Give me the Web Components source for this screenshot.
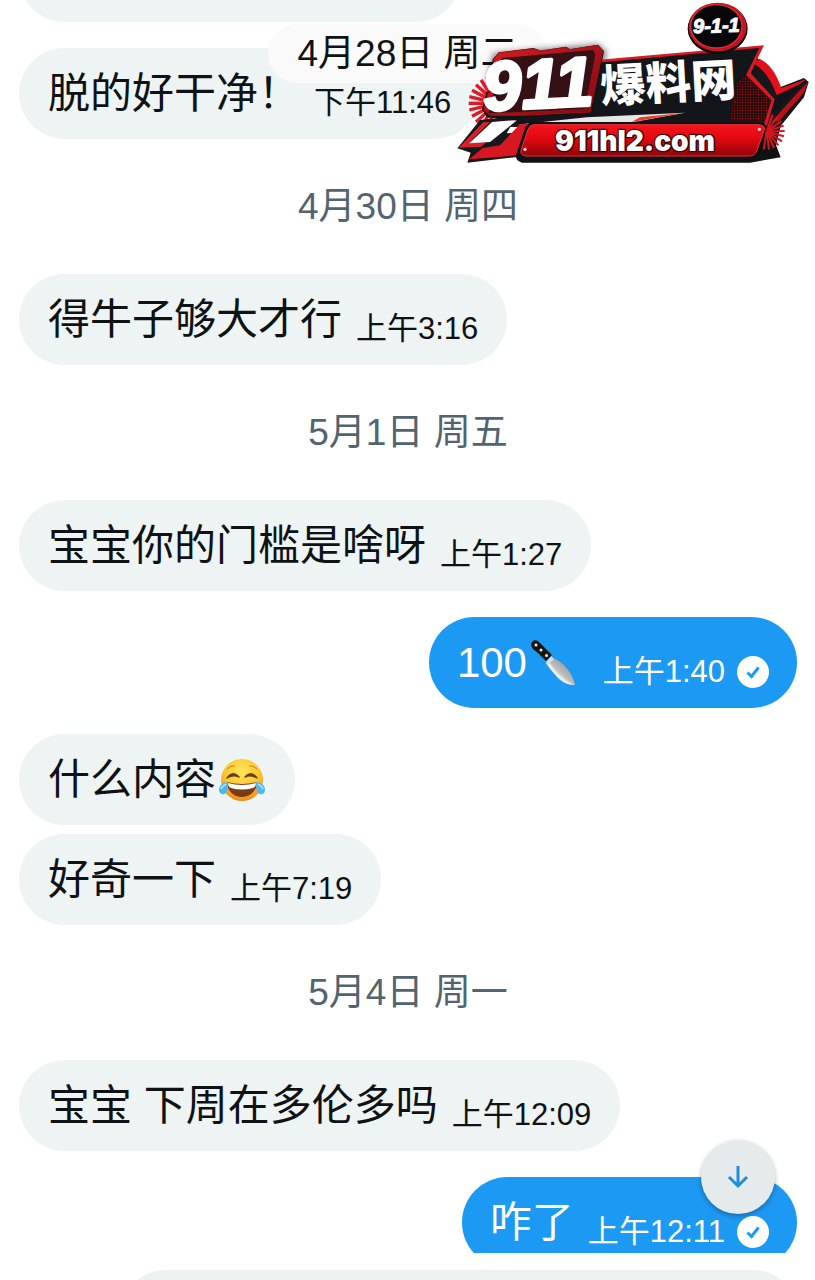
<!DOCTYPE html>
<html lang="zh-CN">
<head>
<meta charset="utf-8">
<meta name="viewport" content="width=device-width, initial-scale=1">
<title>私信</title>
<style>
  body{
    margin: 0;
    background: #fff;
    color: #0f1214;
    font-family: "Liberation Sans", "Noto Sans CJK SC", sans-serif;
  }
</style>
</head>
<body>

<chat-screen>
  <chat-bubble><span style="padding-right:384px"></span></chat-bubble>
  <chat-bubble time="下午11:46">脱的好干净！</chat-bubble>
  <chat-date>4月30日 周四</chat-date>
  <chat-bubble time="上午3:16">得牛子够大才行</chat-bubble>
  <chat-date>5月1日 周五</chat-date>
  <chat-bubble time="上午1:27">宝宝你的门槛是啥呀</chat-bubble>
  <chat-bubble sent time="上午1:40">100<emoji-knife></emoji-knife>&nbsp;</chat-bubble>
  <chat-group>
    <chat-bubble>什么内容<emoji-joy></emoji-joy></chat-bubble>
    <chat-bubble time="上午7:19">好奇一下</chat-bubble>
  </chat-group>
  <chat-date>5月4日 周一</chat-date>
  <chat-bubble time="上午12:09">宝宝 下周在多伦多吗</chat-bubble>
  <chat-bubble sent time="上午12:11">咋了</chat-bubble>

  <floating-date slot="overlay">4月28日 周二</floating-date>
  <scroll-down slot="overlay"></scroll-down>
  <site-badge slot="overlay"></site-badge>
  <chat-composer slot="composer"></chat-composer>
</chat-screen>

<script>
(function chatPage(){
  'use strict';

  class ChatScreen extends HTMLElement{
    constructor(){
      super();
      const shadowRoot = this.attachShadow({mode: 'open'});
      shadowRoot.innerHTML = `
        <style>
          :host{
            display: flex;
            flex-direction: column;
            height: 100vh;
            overflow: hidden;
          }
          main{
            position: relative;
            flex: 1;
            min-height: 0;
            overflow: hidden;
          }
          /* the list is scrolled a little past its first message */
          .list{
            display: flex;
            flex-direction: column;
            gap: 26px;
            margin-top: -69px;
            padding: 0 18px 0 19px;
          }
        </style>
        <main>
          <div class="list"><slot></slot></div>
          <slot name="overlay"></slot>
        </main>
        <slot name="composer"></slot>
      `;
    }
  }

  class ChatGroup extends HTMLElement{
    constructor(){
      super();
      const shadowRoot = this.attachShadow({mode: 'open'});
      shadowRoot.innerHTML = `
        <style>
          :host{
            display: flex;
            flex-direction: column;
            gap: 9px;
          }
        </style>
        <slot></slot>
      `;
    }
  }

  class ChatBubble extends HTMLElement{
    constructor(){
      super();
      const shadowRoot = this.attachShadow({mode: 'open'});
      const time = this.getAttribute('time');
      const check = `
        <svg viewBox="0 0 32 32" role="img" aria-label="已读">
          <circle cx="16" cy="16" r="16" fill="#fff"/>
          <path d="M10.500 16.500l4 4 7-9" fill="none" stroke="#1d9bf0" stroke-width="3"/>
        </svg>`;

      shadowRoot.innerHTML = `
        <style>
          :host{
            display: flex;
          }
          :host([sent]){
            justify-content: flex-end;
          }
          .bubble{
            display: flex;
            align-items: flex-end;
            gap: 14px;
            min-height: 91px;
            padding: 0 29px;
            border-radius: 46px;
            background: #eef3f3;
          }
          :host([sent]) .bubble{
            padding: 0 28px;
            background: #1c99f3;
            color: #fff;
          }
          .text{
            display: flex;
            align-items: center;
            font-size: 42px;
            line-height: 91px;
            white-space: pre;
          }
          .meta{
            display: flex;
            align-items: center;
            gap: 12px;
            padding-bottom: 16px;
            font-size: 31px;
            line-height: 40px;
            white-space: nowrap;
          }
          svg{
            width: 32px;
            height: 32px;
          }
        </style>
        <div class="bubble">
          <span class="text"><slot></slot></span>
          ${time ? `<span class="meta"><time>${time}</time>${this.hasAttribute('sent') ? check : ''}</span>` : ''}
        </div>
      `;
    }
  }

  class ChatDate extends HTMLElement{
    constructor(){
      super();
      const shadowRoot = this.attachShadow({mode: 'open'});
      shadowRoot.innerHTML = `
        <style>
          :host{
            display: block;
            color: #536471;
            font-size: 37px;
            line-height: 83px;
            text-align: center;
          }
        </style>
        <time><slot></slot></time>
      `;
    }
  }

  class FloatingDate extends HTMLElement{
    constructor(){
      super();
      const shadowRoot = this.attachShadow({mode: 'open'});
      shadowRoot.innerHTML = `
        <style>
          :host{
            position: absolute;
            top: 24px;
            left: 0;
            right: 0;
            display: flex;
            justify-content: center;
          }
          time{
            padding: 0 29px;
            border-radius: 30px;
            background: #fafafa;
            font-size: 37px;
            line-height: 59px;
          }
        </style>
        <time><slot></slot></time>
      `;
    }
  }

  class ScrollDown extends HTMLElement{
    constructor(){
      super();
      const shadowRoot = this.attachShadow({mode: 'open'});
      shadowRoot.innerHTML = `
        <style>
          :host{
            position: absolute;
            right: 40px;
            bottom: 39px;
          }
          button{
            display: grid;
            place-items: center;
            width: 74px;
            height: 74px;
            padding: 0;
            border: 0;
            border-radius: 50%;
            background: #e5eaec;
            box-shadow: 0 2px 5px rgba(0, 0, 0, .3);
          }
          svg{
            width: 24px;
            height: 24px;
          }
        </style>
        <button type="button" aria-label="滚动到底部">
          <svg viewBox="0 0 24 24" fill="none" stroke="#1f8fdb" stroke-width="3">
            <path d="M12 1v20M3 12l9 9 9-9"/>
          </svg>
        </button>
      `;
    }
  }

  class ChatComposer extends HTMLElement{
    constructor(){
      super();
      const shadowRoot = this.attachShadow({mode: 'open'});
      shadowRoot.innerHTML = `
        <style>
          :host{
            display: flex;
            height: 27px;
            overflow: hidden;
          }
          form{
            flex: 1;
            display: flex;
            padding: 17px 16px 0 120px;
          }
          input{
            flex: 1;
            min-width: 0;
            height: 91px;
            padding: 0 29px;
            border: 0;
            border-radius: 46px;
            background: #ecf2f2;
            font: inherit;
          }
        </style>
        <form><input type="text" aria-label="发送私信"></form>
      `;
    }
  }

  class EmojiKnife extends HTMLElement{
    constructor(){
      super();
      const shadowRoot = this.attachShadow({mode: 'open'});
      shadowRoot.innerHTML = `
        <style>
          :host{ display: inline-flex; margin-left: 2px; }
          svg{ width: 48px; height: 48px; }
        </style>
        <svg viewBox="0 0 48 48" role="img" aria-label="菜刀">
          <defs>
            <linearGradient id="blade" x1="0" y1="1" x2="1" y2="0">
              <stop offset=".3" stop-color="#f5f7f8"/>
              <stop offset=".5" stop-color="#b9bbbd"/>
              <stop offset=".75" stop-color="#a29d9a"/>
            </linearGradient>
          </defs>
          <path d="M17 24L24 19C34 23 43 33 46 46C36 47 29 41 17 24z" fill="url(#blade)"/>
          <path d="M17 24C27 38 34 45 46 46C37 43 28 36 20 23z" fill="#e8f1f7"/>
          <path d="M17 23l5-6 3 3-6 6z" fill="#d5dde2"/>
          <path d="M3 3C5 0 9 1 11 4L23 16L17 22L12 17C9 14 8 13 5 11C3 9 1 6 3 3z" fill="#171514"/>
          <g fill="#f4e9dc">
            <circle cx="7" cy="6" r="1.500"/>
            <circle cx="12" cy="11" r="1.500"/>
            <circle cx="17.500" cy="16.500" r="1.500"/>
          </g>
        </svg>
      `;
    }
  }

  class EmojiJoy extends HTMLElement{
    constructor(){
      super();
      const shadowRoot = this.attachShadow({mode: 'open'});
      shadowRoot.innerHTML = `
        <style>
          :host{ display: inline-flex; margin-left: 2px; }
          svg{ width: 48px; height: 48px; }
        </style>
        <svg viewBox="0 0 48 48" role="img" aria-label="笑哭">
          <defs>
            <radialGradient id="face" cx=".5" cy=".3" r=".7">
              <stop offset="0" stop-color="#ffe75a"/>
              <stop offset=".6" stop-color="#fdc52f"/>
              <stop offset="1" stop-color="#ee8a20"/>
            </radialGradient>
          </defs>
          <circle cx="24" cy="24" r="21" fill="url(#face)"/>
          <path d="M9 13q4-4 8-3M39 13q-4-4-8-3" fill="none" stroke="#c98212" stroke-width="1"/>
          <path d="M9 22Q15 14 21 21Q15 18 9 22zM27 21Q33 14 39 22Q33 18 27 21z" fill="#6b3c10" stroke="#6b3c10" stroke-width="1.500" stroke-linejoin="round"/>
          <path d="M9 26Q24 30 39 26C39 35 32 41 24 41S9 35 9 26z" fill="#7a3b14"/>
          <path d="M10 27Q24 31 38 27Q38 31 35 32Q24 35 13 32Q10 31 10 27z" fill="#fff"/>
          <path d="M10 26C4 26 1 30 1 34C1 39 8 40 9 35C10 32 10 29 10 26zM38 26C44 26 47 30 47 34C47 39 40 40 39 35C38 32 38 29 38 26z" fill="#4fb8ea"/>
          <path d="M8 28Q4 30 3 33M40 28Q44 30 45 33" fill="none" stroke="#a9e2fa" stroke-width="1.500"/>
        </svg>
      `;
    }
  }

  class SiteBadge extends HTMLElement{
    constructor(){
      super();

      // pleated fans behind both ends of the banner
      const fan = (cx, cy, r, from, to, step) => {
        let rays = '';
        for(let a = from; a <= to; a += step){
          const x = Math.round(cx + r * Math.cos(a * Math.PI / 180));
          const y = Math.round(cy + r * Math.sin(a * Math.PI / 180));
          rays += `<path d="M${cx} ${cy}L${x} ${y}"/>`;
        }
        return rays;
      };

      const shadowRoot = this.attachShadow({mode: 'open'});
      shadowRoot.innerHTML = `
        <style>
          :host{
            position: absolute;
            top: 0;
            right: 0;
          }
          svg{
            display: block;
            width: 375px;
            height: 180px;
          }
          text{
            fill: #fff;
            font-weight: 900;
            font-style: italic;
          }
          .big{
            font-family: "Liberation Sans Narrow", "Liberation Sans", sans-serif;
            font-size: 208px;
          }
          .han{
            font-family: "Noto Sans CJK SC", sans-serif;
            font-size: 136px;
            font-style: normal;
          }
          .url{
            font-family: Inter, sans-serif;
            font-size: 84px;
            font-style: normal;
          }
          .small{
            font-family: "Liberation Sans Narrow", "Liberation Sans", sans-serif;
            font-size: 60px;
          }
        </style>
        <svg viewBox="0 0 1125 540" role="img" aria-label="911爆料网 911hl2.com">
          <defs>
            <linearGradient id="red" x1="0" y1="0" x2="0" y2="1">
              <stop offset="0" stop-color="#f5141c"/>
              <stop offset=".5" stop-color="#dc0810"/>
              <stop offset="1" stop-color="#8e0509"/>
            </linearGradient>
            <linearGradient id="edge" x1="0" y1="0" x2="1" y2="1">
              <stop offset="0" stop-color="#d81c24"/>
              <stop offset="1" stop-color="#7b0a10"/>
            </linearGradient>
            <pattern id="dots" width="8" height="8" patternUnits="userSpaceOnUse">
              <rect width="8" height="8" fill="#26080a"/>
              <circle cx="4" cy="4" r="2" fill="#c0101a"/>
            </pattern>
            <filter id="soft" x="-10%" y="-10%" width="120%" height="120%">
              <feGaussianBlur stdDeviation="9"/>
            </filter>
          </defs>

          <path d="M160 160L474 132L500 154L460 340L150 340L126 300z" fill="#000" opacity=".5" filter="url(#soft)"/>

          <g stroke="#e01826" stroke-width="10">${fan(170, 310, 84, 110, 260, 14)}</g>

          <!-- arrow tail on the right -->
          <path d="M950 170L1020 262L1092 234L1106 246L1092 292L1022 378L1000 470L900 440L900 200z" fill="#15171b"/>
          <path d="M958 176Q1000 195 1024 264L1098 238Q1090 250 1010 285Q985 215 940 190z" fill="#e2101a"/>
          <path d="M1104 246L1092 278L1018 362L994 366L1078 272z" fill="#ba1119"/>
          <path d="M1086 258L1064 274L990 352L975 340L1012 290z" fill="#111318"/>

          <!-- dark panel behind the name -->
          <path d="M470 180L972 136L932 220L1004 298L980 380L380 386L200 380L150 340z" fill="#d51b24"/>
          <path d="M470 188L958 144L918 226L994 300L972 372L380 380L200 380z" fill="#131519"/>
          <path d="M918 226L994 300L972 366L870 362L890 250z" fill="url(#dots)"/>
          <path d="M440 352L735 338L560 370L230 374z" fill="#e7e7e9"/>
          <path d="M600 352L735 338L575 366z" fill="#f03b24"/>

          <!-- lightning tail on the left -->
          <path d="M120 360L230 348L200 400L260 395L240 470L82 488L92 458L52 445z" fill="#17181b"/>
          <path d="M130 366L150 366L92 424L138 426L124 440L56 443z" fill="#d3202a"/>
          <path d="M156 366L232 360L150 426L88 430z" fill="#fff"/>
          <path d="M238 374L278 370L240 440L230 466L88 478L128 444L180 436z" fill="#d71822"/>

          <!-- banner with the address -->
          <path d="M270 366H966L982 380L1010 440L1022 472L930 488H246Q222 480 230 460L256 382z" fill="#101114"/>
          <path d="M280 374H958Q978 376 972 392L950 454Q944 468 926 468H258Q238 466 244 448L264 388Q268 376 280 374z" fill="url(#red)" stroke="#ee3138" stroke-width="3"/>
          <g fill="#ffd4d4">
            <circle cx="255" cy="448" r="5"/><circle cx="958" cy="388" r="5"/>
          </g>
          <g stroke="#d8141e" stroke-width="6">${fan(980, 395, 54, -70, 100, 17)}</g>

          <!-- plate behind the number -->
          <path d="M176 158L280 144L302 152L378 140L390 148L474 134L492 154L454 340L250 352L236 362L140 352L126 328L140 276L160 266L146 240L158 178z" fill="#121317"/>
          <path d="M176 158L280 146L302 153L378 142L390 149L474 136L488 154L450 336L246 346L150 346L132 330L144 280L166 268L150 240L162 178z" fill="url(#edge)" stroke="#a90d16" stroke-width="3"/>
          <path d="M186 174L460 150L466 164L434 326L146 340z" fill="#351014"/>

          <text class="big" x="132" y="332" transform="rotate(-3 132 332)" stroke="#fff" stroke-width="10" stroke-linejoin="round">911</text>
          <text class="han" x="484" y="308" transform="rotate(-3 484 308)">爆料网</text>
          <text class="url" x="345" y="454" stroke="#3b0507" stroke-width="8" paint-order="stroke">911hl2.com</text>

          <!-- round stamp -->
          <ellipse cx="833" cy="86" rx="90" ry="76" fill="#0b0b0d"/>
          <ellipse cx="833" cy="81" rx="87" ry="73" fill="#c01822"/>
          <ellipse cx="829" cy="79" rx="77" ry="65" fill="#08080a" stroke="#f02630" stroke-width="4"/>
          <text class="small" x="760" y="100" transform="rotate(-2 760 100)" stroke="#fff" stroke-width="3">9-1-1</text>
        </svg>
      `;
    }
  }

  // small parts
  customElements.define('emoji-knife', EmojiKnife);
  customElements.define('emoji-joy', EmojiJoy);
  customElements.define('chat-date', ChatDate);
  customElements.define('chat-bubble', ChatBubble);
  customElements.define('chat-group', ChatGroup);

  // overlays
  customElements.define('floating-date', FloatingDate);
  customElements.define('scroll-down', ScrollDown);
  customElements.define('site-badge', SiteBadge);

  // page
  customElements.define('chat-composer', ChatComposer);
  customElements.define('chat-screen', ChatScreen);

})();
</script>
</body>
</html>
